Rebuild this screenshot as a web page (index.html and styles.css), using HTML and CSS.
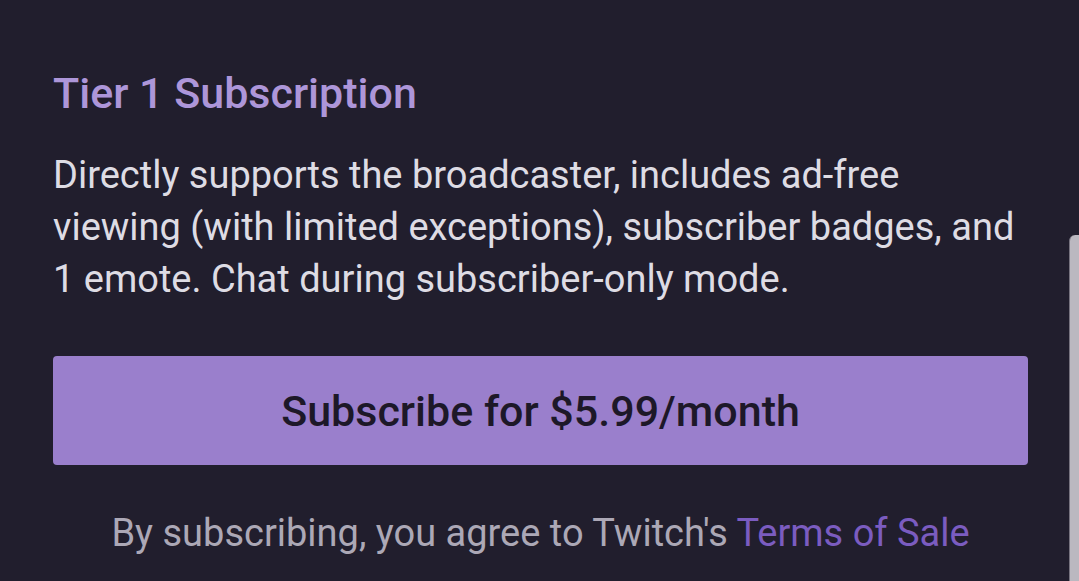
FILE: index.html
```html
<!DOCTYPE html>
<html lang="en">
<head>
<meta charset="utf-8">
<title>Tier 1 Subscription</title>
<link rel="stylesheet" href="styles.css">
</head>
<body>
<main class="sheet">
  <h1 class="tier-title">Tier 1 Subscription</h1>
  <p class="tier-desc">Directly supports the broadcaster, includes ad-free viewing (with limited exceptions), subscriber badges, and 1 emote. Chat during subscriber-only mode.</p>
  <button class="sub-button" type="button">Subscribe for $5.99/month</button>
  <p class="terms">By subscribing, you agree to Twitch's <a class="terms-link" href="#">Terms of Sale</a></p>
</main>
<div class="edge-panel"></div>
</body>
</html>
```
FILE: styles.css
```css
html, body {
  margin: 0;
  padding: 0;
  background: #211e2d;
  height: 100%;
  overflow: hidden;
}
body {
  font-family: Roboto, "Noto Sans", sans-serif;
  position: relative;
}
.sheet {
  display: flex;
  flex-direction: column;
  padding: 67px 51px 0 53px;
}
.tier-title {
  margin: 0;
  font-size: 43px;
  line-height: 52px;
  font-weight: 500;
  color: #ad96d9;
}
.tier-desc {
  margin: 30px 0 0 0;
  font-size: 38px;
  line-height: 52px;
  font-weight: 400;
  color: #dedce4;
}
.sub-button {
  margin-top: 51px;
  height: 109px;
  width: 100%;
  border: none;
  border-radius: 4px;
  background: #9a7fcc;
  color: #1d1828;
  font-family: inherit;
  font-size: 43px;
  font-weight: 500;
}
.terms {
  margin: 46px 0 0 0;
  text-align: center;
  font-size: 38px;
  line-height: 44px;
  color: #aca8b6;
}
.terms-link {
  color: #7b5cc0;
  text-decoration: none;
}
.edge-panel {
  position: absolute;
  left: 1069px;
  top: 235px;
  width: 10px;
  height: 346px;
  background: #bbb8c0;
  border-left: 1px solid #77737f;
  border-top-left-radius: 6px;
}
```
